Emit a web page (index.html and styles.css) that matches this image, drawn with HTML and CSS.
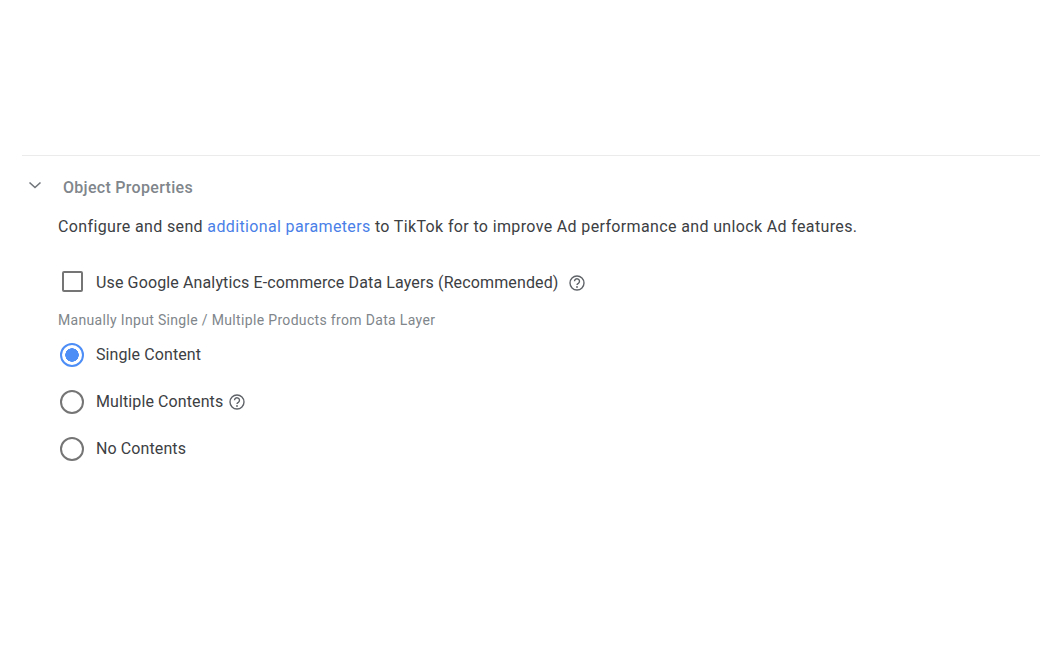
FILE: index.html
```html
<!DOCTYPE html>
<html lang="en">
<head>
  <meta charset="UTF-8">
  <title>Object Properties</title>
  <link rel="stylesheet" href="styles.css">
</head>
<body>
  <section class="panel">
    <div class="panel-header">
      <svg class="chevron" width="14" height="9" viewBox="0 0 14 9"><path d="M1.500 1.500 7 6.500 12.500 1.500" fill="none" stroke="#70757a" stroke-width="1.6"/></svg>
      <span class="panel-title">Object Properties</span>
    </div>
    <p class="intro">Configure and send <a href="#">additional parameters</a> to TikTok for to improve Ad performance and unlock Ad features.</p>

    <label class="check-row">
      <span class="checkbox"></span>
      <span class="check-label">Use Google Analytics E-commerce Data Layers (Recommended)</span>
      <svg class="help help-wide" width="18" height="18" viewBox="0 0 18 18"><circle cx="9" cy="9" r="7" fill="none" stroke="#5f6368" stroke-width="1.4"/><path d="M6.500 7.300a2.500 2.500 0 1 1 3.900 2c-.9.5-1.400 1-1.400 1.800" fill="none" stroke="#5f6368" stroke-width="1.400"/><circle cx="9" cy="13" r=".9" fill="#5f6368"/></svg>
    </label>

    <div class="hint">Manually Input Single / Multiple Products from Data Layer</div>

    <div class="radio-group">
      <label class="radio-row">
        <span class="radio radio--on"></span>
        <span>Single Content</span>
      </label>
      <label class="radio-row">
        <span class="radio"></span>
        <span>Multiple Contents</span>
        <svg class="help" width="18" height="18" viewBox="0 0 18 18"><circle cx="9" cy="9" r="7" fill="none" stroke="#5f6368" stroke-width="1.4"/><path d="M6.500 7.300a2.500 2.500 0 1 1 3.900 2c-.9.5-1.400 1-1.400 1.800" fill="none" stroke="#5f6368" stroke-width="1.400"/><circle cx="9" cy="13" r=".9" fill="#5f6368"/></svg>
      </label>
      <label class="radio-row">
        <span class="radio"></span>
        <span>No Contents</span>
      </label>
    </div>
  </section>
</body>
</html>
```

FILE: styles.css
```css
/* page */
body {
  margin: 0;
  background: #fff;
  font-family: Roboto, "Liberation Sans", sans-serif;
  color: #3c4043;
}

.panel {
  margin: 155px 0 0 22px;
  border-top: 1px solid #ebebeb;
  padding: 0 0 40px 36px;
}

/* header */
.panel-header {
  display: flex;
  align-items: center;
  height: 20px;
  margin: 21px 0 0 -29px;
}

.chevron {
  margin-left: -1px;
  margin-right: 21px;
  margin-top: -3px;
}

.panel-title {
  font-size: 16px;
  font-weight: 500;
  letter-spacing: 0.3px;
  color: #80868b;
}

.intro {
  margin: 19px 0 0;
  font-size: 16px;
  line-height: 22px;
  letter-spacing: 0.36px;
  color: #3c4043;
}

.intro a {
  color: #4a7fe8;
  text-decoration: none;
}

/* checkbox row */
.check-row {
  display: flex;
  align-items: center;
  height: 24px;
  margin: 32px 0 0 4px;
  font-size: 16px;
  letter-spacing: 0.13px;
}

.checkbox {
  box-sizing: border-box;
  width: 21px;
  height: 21px;
  border: 2px solid #757575;
  border-radius: 2px;
  margin-right: 13px;
  margin-top: -2px;
}

.help {
  margin-left: 5px;
  margin-top: 1px;
}

.help-wide {
  margin-left: 9px;
  margin-top: 2px;
}

.hint {
  margin-top: 18px;
  font-size: 14px;
  line-height: 16px;
  letter-spacing: 0.33px;
  color: #80868b;
}

/* radios */
.radio-group {
  display: flex;
  flex-direction: column;
  gap: 23px;
  margin: 14px 0 0 2px;
}

.radio-row {
  display: flex;
  align-items: center;
  height: 24px;
  font-size: 16px;
  letter-spacing: 0.1px;
}

.radio {
  box-sizing: border-box;
  flex: none;
  width: 24px;
  height: 24px;
  border: 2px solid #757575;
  border-radius: 50%;
  margin-right: 12px;
  margin-top: 2px;
}

.radio--on {
  border-color: #4d8df6;
  background: radial-gradient(circle, #4d8df6 0 6.5px, #fff 7px);
}
```
